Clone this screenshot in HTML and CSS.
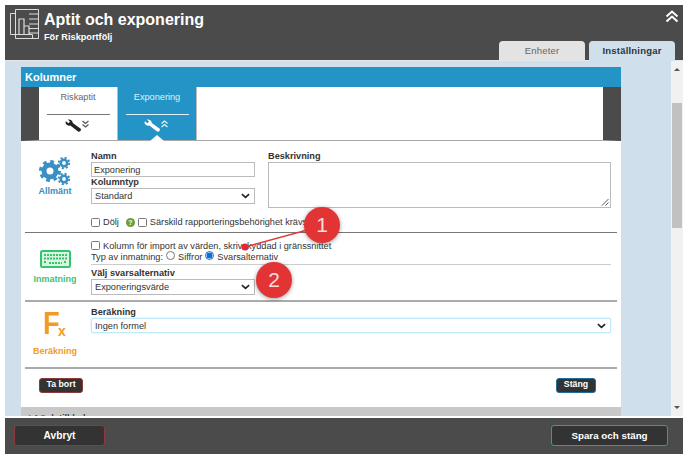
FILE: index.html
```html
<!DOCTYPE html>
<html lang="sv">
<head>
<meta charset="utf-8">
<title>Aptit och exponering</title>
<link rel="stylesheet" href="styles.css">
</head>
<body>
<div class="app">
  <header class="top">
    <svg class="logo" viewBox="0 0 29 30" width="29" height="30" fill="none" stroke="#dcdcdc" stroke-width="1">
      <path d="M.5 4.500h5M.5 4.500v21h22v4"/>
      <path d="M5.500.5h23v29h-23z"/>
      <path d="M9 25V10h5v15M14 25v-8h5v8M19 5h9M19 10h9M19 15h9M19 19.500h9M19 24h9" stroke-width="1.200"/>
    </svg>
    <div class="titles">
      <h1>Aptit och exponering</h1>
      <p>För Riskportfölj</p>
    </div>
    <svg class="collapse" viewBox="0 0 14 13" width="14" height="13" fill="none" stroke="#fff" stroke-width="2"><path d="M1.500 6.500 7 1.500l5.500 5M1.500 11.500 7 6.500l5.500 5"/></svg>
    <nav class="pagetabs">
      <span class="ptab">Enheter</span>
      <span class="ptab active">Inställningar</span>
    </nav>
  </header>

  <div class="middle">
    <main class="canvas">
      <section class="panel">
        <h2 class="panel-title">Kolumner</h2>
        <div class="tabs">
          <div class="tab">
            <span class="tab-label">Riskaptit</span>
            <svg viewBox="0 0 30 16" width="30" height="16"><path d="M2.500 3.200a3.600 3.600 0 0 0 4.800 3.300l7.800 6a2 2 0 0 0 2.600-2.700l-7.900-5.700A3.700 3.700 0 0 0 5 .6l2 2.200-1.600 1.500-2.500-2.100z" fill="#222"/><path d="m19.500 2 3 2.500L25.500 2M19.500 5.500l3 2.500 3-2.500" fill="none" stroke="#555" stroke-width="1.200"/></svg>
          </div>
          <div class="tab on">
            <span class="tab-label">Exponering</span>
            <svg viewBox="0 0 30 16" width="30" height="16"><path d="M2.500 3.200a3.600 3.600 0 0 0 4.800 3.300l7.800 6a2 2 0 0 0 2.600-2.700l-7.900-5.700A3.700 3.700 0 0 0 5 .6l2 2.200-1.600 1.500-2.500-2.100z" fill="#fff"/><path d="m19.500 4.500 3-2.500 3 2.500M19.500 8l3-2.500 3 2.500" fill="none" stroke="#e6f2f8" stroke-width="1.200"/></svg>
            <i class="notch"></i>
          </div>
        </div>

        <div class="sec sec-general">
          <div class="side blue">
            <svg viewBox="0 0 33 28" width="33" height="28" fill="none" stroke="#3a8fc4">
              <circle cx="11" cy="14" r="6" stroke-width="5"/>
              <circle cx="11" cy="14" r="9.500" stroke-width="3" stroke-dasharray="3.730 3.730"/>
              <circle cx="25" cy="6" r="3.200" stroke-width="2.600"/>
              <circle cx="25" cy="6" r="5.200" stroke-width="2" stroke-dasharray="2.040 2.040"/>
              <circle cx="25" cy="22" r="3.200" stroke-width="2.600"/>
              <circle cx="25" cy="22" r="5.200" stroke-width="2" stroke-dasharray="2.040 2.040"/>
            </svg>
            <span>Allmänt</span>
          </div>
          <div class="general-body">
            <div class="general-fields">
              <div class="col-left">
                <label class="lbl">Namn</label>
                <input class="field" type="text" value="Exponering">
                <label class="lbl">Kolumntyp</label>
                <div class="sel">Standard<svg viewBox="0 0 10 6" width="9" height="6"><path d="m1 1 4 3.500L9 1" fill="none" stroke="#222" stroke-width="1.800"/></svg></div>
              </div>
              <div class="col-right">
                <label class="lbl">Beskrivning</label>
                <div class="area"><svg viewBox="0 0 8 8" width="8" height="8"><path d="M7.500 1 1 7.500M7.500 4.500l-3 3" stroke="#555" fill="none"/></svg></div>
              </div>
            </div>
            <div class="checks">
              <span class="cb"></span><span class="t">Dölj</span>
              <span class="help">?</span>
              <span class="cb"></span><span class="t">Särskild rapporteringsbehörighet krävs</span>
            </div>
          </div>
        </div>

        <div class="sec sec-input">
          <div class="side green">
            <svg viewBox="0 0 31 18" width="31" height="18"><rect x="1" y="1" width="29" height="16" rx="1.500" fill="#d8f5e2" stroke="#35c46e" stroke-width="2"/><path d="M4 5h23M4 8.500h23M4 12h3M24 12h3M9 13h13" stroke="#35c46e" stroke-width="1.800" stroke-dasharray="2 1"/></svg>
            <span>Inmatning</span>
          </div>
          <div class="input-body">
            <div class="line-import"><span class="cb"></span><span class="t">Kolumn för import av värden, skrivskyddad i gränssnittet</span></div>
            <div class="line-type">
              <span class="t">Typ av inmatning:</span>
              <span class="radio"></span><span class="t">Siffror</span>
              <span class="radio sel-r"></span><span class="t">Svarsalternativ</span>
            </div>
            <label class="lbl">Välj svarsalternativ</label>
            <div class="sel">Exponeringsvärde<svg viewBox="0 0 10 6" width="9" height="6"><path d="m1 1 4 3.500L9 1" fill="none" stroke="#222" stroke-width="1.800"/></svg></div>
          </div>
        </div>

        <div class="sec sec-calc">
          <div class="side orange">
            <div class="fx"><b class="f">F</b><b class="x">x</b></div>
            <span>Beräkning</span>
          </div>
          <div class="calc-body">
            <label class="lbl">Beräkning</label>
            <div class="sel sel-focus">Ingen formel<svg viewBox="0 0 10 6" width="9" height="6"><path d="m1 1 4 3.500L9 1" fill="none" stroke="#222" stroke-width="1.800"/></svg></div>
          </div>
        </div>

        <div class="actions">
          <button class="mini red">Ta bort</button>
          <button class="mini blue-b">Stäng</button>
        </div>
        <div class="link-bar">+ Länk till kolumn</div>
      </section>
    </main>
    <aside class="scroll">
      <i class="arrow up"></i>
      <i class="thumb"></i>
      <i class="arrow down"></i>
    </aside>
  </div>

  <footer class="bottom">
    <button class="big cancel">Avbryt</button>
    <button class="big save">Spara och stäng</button>
  </footer>
</div>

<svg class="marks" viewBox="0 0 688 459" width="688" height="459">
  <line x1="245" y1="247" x2="322" y2="226" stroke="#e5383b" stroke-width="1.400"/>
  <circle cx="245" cy="247" r="3.600" fill="#e8262a"/>
  <circle class="mark" cx="322" cy="225" r="18" fill="#e23335"/>
  <circle class="mark" cx="274" cy="280" r="18" fill="#e23335"/>
  <text x="322" y="232" text-anchor="middle" class="mark-t">1</text>
  <text x="274" y="287" text-anchor="middle" class="mark-t">2</text>
</svg>
</body>
</html>
```
FILE: styles.css
```css
* { box-sizing: border-box; }
html, body { margin: 0; padding: 0; }
body {
  width: 688px;
  height: 459px;
  overflow: hidden;
  background: #fff;
  position: relative;
  font-family: "Liberation Sans", Arial, sans-serif;
  font-size: 9.200px;
  color: #333;
}
.app {
  width: 678px;
  height: 449px;
  margin: 5px 0 0 5px;
  display: flex;
  flex-direction: column;
}
.top {
  height: 55px;
  flex: none;
  background: #4b4b4b;
  position: relative;
  display: flex;
  padding: 4px 0 0 5px;
  color: #fff;
}
.logo { flex: none; }
.titles { margin-left: 5px; }
.titles h1 { margin: 1px 0 0; font-size: 16px; line-height: 20px; font-weight: 700; }
.titles p { margin: 2px 0 0; font-size: 9.200px; line-height: 10px; font-weight: 700; }
.collapse { position: absolute; right: 4px; top: 5px; }
.pagetabs {
  position: absolute;
  right: 8px;
  bottom: 0;
  display: flex;
  gap: 4px;
}
.ptab {
  width: 86px;
  height: 19px;
  background: #e3e3e3;
  border-radius: 4px 4px 0 0;
  color: #666;
  font-size: 9.500px;
  text-align: center;
  line-height: 19px;
  letter-spacing: .2px;
}
.ptab.active {
  background: #cfe0ec;
  color: #333;
  font-weight: 700;
  height: 20px;
  margin-bottom: -1px;
}
.middle {
  height: 356px;
  flex: none;
  display: flex;
  border-top: 1px solid #e8e8e8;
  overflow: hidden;
}
.canvas {
  width: 666px;
  flex: none;
  background: #cfe0ec;
  padding: 6px 0 0 16px;
}
.scroll {
  flex: 1;
  background: #f1f1f1;
  position: relative;
}
.thumb {
  position: absolute;
  left: 1px;
  right: 1px;
  top: 42px;
  height: 125px;
  background: #c1c1c1;
}
.arrow {
  position: absolute;
  left: 3px;
  width: 0;
  height: 0;
  border-left: 3px solid transparent;
  border-right: 3px solid transparent;
}
.arrow.up { top: 7px; border-bottom: 3px solid #555; }
.arrow.down { bottom: 7px; border-top: 3px solid #555; }
.panel {
  width: 600px;
  background: #fff;
}
.panel-title {
  margin: 0;
  height: 20px;
  background: #2494c6;
  color: #fff;
  font-size: 11px;
  font-weight: 700;
  line-height: 20px;
  padding-left: 4px;
}
.tabs {
  height: 54px;
  background: #fff;
  display: flex;
  border-left: 18px solid #4b4b4b;
  border-right: 18px solid #4b4b4b;
  border-bottom: 1px solid #a8a8a8;
}
.tab {
  width: 79px;
  height: 53px;
  position: relative;
  display: flex;
  flex-direction: column;
  align-items: center;
  color: #666;
  border-right: 1px solid #bbb;
}
.tab-label {
  width: 63px;
  height: 23px;
  margin-top: 5px;
  text-align: center;
  border-bottom: 1px solid #777;
}
.tab svg { margin-top: 4px; }
.tab.on {
  background: #2494c6;
  color: #dff0f8;
}
.tab.on .tab-label { border-bottom-color: #dff0f8; }
.notch {
  position: absolute;
  left: 32px;
  bottom: -1px;
  width: 0;
  height: 0;
  border-left: 7px solid transparent;
  border-right: 7px solid transparent;
  border-bottom: 6px solid #fff;
}
.sec {
  margin: 0 4px;
  display: flex;
}
.side {
  width: 66px;
  flex: none;
  padding-right: 6px;
  display: flex;
  flex-direction: column;
  align-items: center;
  font-weight: 700;
  font-size: 9px;
}
.side.blue { color: #3b8cc0; padding-top: 16px; gap: 1px; }
.side.green { color: #3fc274; padding-top: 17px; gap: 6px; }
.side.orange { color: #f39a24; padding-top: 8px; }
.sec-general {
  height: 92px;
  border-bottom: 1px solid #777;
}
.general-body { width: 520px; padding-top: 10px; }
.general-fields { display: flex; gap: 13px; }
.col-left { width: 164px; }
.col-right { width: 343px; }
.lbl {
  display: block;
  font-size: 9.200px;
  font-weight: 700;
  line-height: 11px;
  color: #333;
}
.field {
  display: block;
  width: 164px;
  height: 15px;
  border: 1px solid #bbb;
  padding: 0 2px;
  margin: 0;
  font: 9.200px "Liberation Sans", Arial, sans-serif;
  color: #333;
  background: #fff;
}
.sel {
  height: 16px;
  width: 164px;
  border: 1px solid #bbb;
  padding: 0 4px 0 3px;
  display: flex;
  align-items: center;
  justify-content: space-between;
  background: #fff;
  color: #333;
}
.area {
  height: 46px;
  border: 1px solid #bbb;
  display: flex;
  justify-content: flex-end;
  align-items: flex-end;
  padding: 0 1px 1px 0;
}
.area svg { display: block; }
.checks {
  display: flex;
  align-items: center;
  margin-top: 8px;
  height: 12px;
}
.cb {
  flex: none;
  width: 9px;
  height: 9px;
  border: 1px solid #777;
  border-radius: 1.500px;
  background: #fff;
}
.t { margin-left: 3px; white-space: nowrap; }
.help {
  flex: none;
  width: 9px;
  height: 9px;
  margin: 0 3px 0 7px;
  border-radius: 50%;
  background: #6f9a3a;
  color: #fff;
  font-size: 7px;
  font-weight: 700;
  line-height: 9px;
  text-align: center;
}
.sec-input {
  height: 69px;
  border-bottom: 2px solid #aaa;
}
.input-body { width: 520px; padding-top: 7px; }
.line-import { display: flex; align-items: center; height: 11px; }
.line-type {
  display: flex;
  align-items: center;
  height: 13px;
  margin-top: 1px;
  padding-bottom: 3px;
  border-bottom: 1px solid #ccc;
  margin-bottom: 3px;
}
.line-type > .t:first-child { margin-left: 0; }
.radio {
  flex: none;
  width: 9px;
  height: 9px;
  margin: 0 0 3px 3px;
  border: 1px solid #777;
  border-radius: 50%;
  background: #fff;
}
.radio.sel-r {
  border: 1px solid #0a6fd8;
  background: radial-gradient(circle, #0a6fd8 0 2.800px, #fff 3.200px);
}
.sec-calc {
  height: 67px;
  border-bottom: 2px solid #aaa;
}
.fx {
  height: 32px;
  width: 24px;
  color: #f39a24;
  position: relative;
  margin-bottom: 4px;
}
.fx .f {
  position: absolute;
  left: 0;
  top: -3px;
  font-size: 32px;
  line-height: 32px;
  font-weight: 700;
  transform: scaleX(.85);
  transform-origin: left center;
}
.fx .x {
  position: absolute;
  left: 15px;
  top: 13px;
  font-size: 14px;
  line-height: 16px;
  font-weight: 700;
}
.calc-body { width: 520px; padding-top: 5px; }
.sel-focus {
  width: 520px;
  height: 15px;
  border: 1px solid #bfe8fb;
  border-radius: 2px;
  box-shadow: 0 0 2px #bfe8fb;
}
.actions {
  height: 38px;
  display: flex;
  justify-content: space-between;
  align-items: flex-start;
  padding: 9px 25px 0 18px;
}
.mini {
  height: 15px;
  margin: 0;
  padding: 0 0 3px;
  border-radius: 3px;
  background: #333;
  color: #fff;
  font: 700 8.800px/9px "Liberation Sans", Arial, sans-serif;
}
.mini.red { width: 44px; border: 1px solid #8a3a3a; }
.mini.blue-b { width: 40px; border: 1px solid #1f6f98; }
.link-bar {
  height: 20px;
  background: #c8c8c8;
  padding: 6px 0 0 6px;
  font-weight: 700;
  color: #444;
}
.bottom {
  flex: 1;
  background: #4b4b4b;
  display: flex;
  justify-content: space-between;
  align-items: flex-start;
  padding: 7px 15px 0 9px;
  border-top: 2px solid #fff;
}
.big {
  height: 21px;
  margin: 0;
  padding: 0;
  border-radius: 3px;
  background: #333;
  color: #fff;
  font: 700 10.200px "Liberation Sans", Arial, sans-serif;
}
.big.cancel { width: 91px; border: 1px solid #8f3a3a; }
.big.save { width: 117px; border: 1px solid #2f95c8; font-size: 9.800px; }
.marks {
  position: absolute;
  left: 0;
  top: 0;
  pointer-events: none;
}
.mark { filter: drop-shadow(0 1px 2px rgba(0,0,0,.4)); }
.mark-t {
  font: 400 21px "Liberation Sans", Arial, sans-serif;
  fill: #f6dede;
}
```
